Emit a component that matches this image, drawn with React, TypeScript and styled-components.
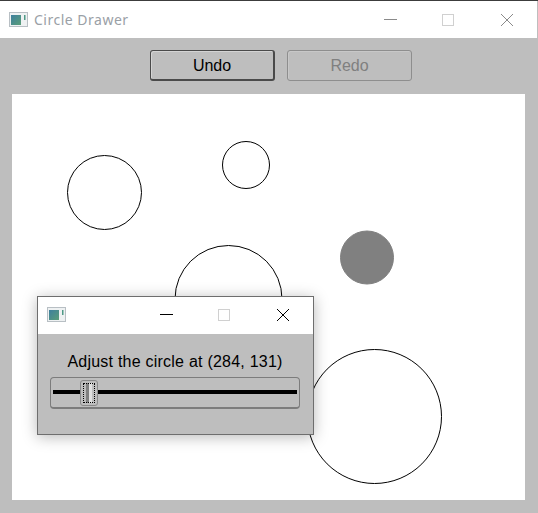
import styled, { createGlobalStyle } from "styled-components";

const circles = [
  { cx: 92.5, cy: 98.5, r: 37 },
  { cx: 234, cy: 71, r: 23.5 },
  { cx: 216.5, cy: 205, r: 53.5 },
  { cx: 355, cy: 163.5, r: 26.5, selected: true },
  { cx: 362.5, cy: 322.5, r: 67 },
];

function AppIcon({ id }: { id: string }) {
  return (
    <IconSvg width="20" height="16" viewBox="0 0 20 16">
      <defs>
        <linearGradient id={id} x1="0" y1="0" x2="1" y2="1">
          <stop offset="0" stopColor="#3d7f9e" />
          <stop offset="1" stopColor="#5a9e78" />
        </linearGradient>
      </defs>
      <rect x="0.5" y="0.5" width="18" height="14" fill="#eef1f2" stroke="#b8bfc4" />
      <rect x="2" y="3" width="10" height="10" fill={`url(#${id})`} />
      <rect x="15" y="3" width="1.5" height="5" fill="#4f9a86" />
    </IconSvg>
  );
}

function WindowButtons({ faded }: { faded?: boolean }) {
  const stroke = faded ? "#8a8a8a" : "#000";
  return (
    <>
      <WinButton>
        <svg width="14" height="14" viewBox="0 0 14 14">
          <path d="M0 6.5H13" stroke={stroke} strokeWidth="1" fill="none" />
        </svg>
      </WinButton>
      <WinButton>
        <svg width="14" height="14" viewBox="0 0 14 14">
          <rect x="0.5" y="1.5" width="11" height="11" stroke="#d0d0d0" fill="none" />
        </svg>
      </WinButton>
      <WinButton>
        <svg width="14" height="14" viewBox="0 0 14 14">
          <path d="M1 1L13 13M13 1L1 13" stroke={stroke} strokeWidth="1" fill="none" />
        </svg>
      </WinButton>
    </>
  );
}

export default function App() {
  return (
    <>
      <GlobalStyle />
      <Window>
        <TitleBar>
          <AppIcon id="main-icon" />
          <Title>Circle Drawer</Title>
          <TitleButtons>
            <WindowButtons faded />
          </TitleButtons>
        </TitleBar>
        <Body>
          <Toolbar>
            <PushButton $focused>Undo</PushButton>
            <PushButton disabled>Redo</PushButton>
          </Toolbar>
          <Canvas>
            <svg width="513" height="406" viewBox="0 0 513 406">
              {circles.map((c) => (
                <circle
                  key={c.cx}
                  cx={c.cx}
                  cy={c.cy}
                  r={c.r}
                  fill={c.selected ? "#808080" : "#fff"}
                  stroke={c.selected ? "#808080" : "#000"}
                  strokeWidth="1"
                />
              ))}
            </svg>
            <Dialog>
              <DialogTitleBar>
                <AppIcon id="dialog-icon" />
                <DialogButtons>
                  <WindowButtons />
                </DialogButtons>
              </DialogTitleBar>
              <DialogBody>
                <Label>Adjust the circle at (284, 131)</Label>
                <Slider>
                  <Groove />
                  <Thumb>
                    <ThumbFocus />
                  </Thumb>
                </Slider>
              </DialogBody>
            </Dialog>
          </Canvas>
        </Body>
      </Window>
    </>
  );
}

const GlobalStyle = createGlobalStyle`
  html, body {
    margin: 0;
    padding: 0;
    background: #bebebe;
  }
`;

const Window = styled.div`
  width: 538px;
  height: 513px;
  display: flex;
  flex-direction: column;
  overflow: hidden;
  background: #bebebe;
  border-top: 1px solid #3c3c3c;
  box-sizing: border-box;
  font-family: "Liberation Sans", Arial, sans-serif;
`;

const TitleBar = styled.div`
  height: 37px;
  flex-shrink: 0;
  display: flex;
  align-items: center;
  padding-left: 9px;
  background: #fff;
  margin-right: 1px;
`;

const IconSvg = styled.svg`
  flex-shrink: 0;
`;

const Title = styled.div`
  margin-left: 5px;
  font-family: "Noto Sans", "Open Sans", sans-serif;
  font-size: 14px;
  letter-spacing: 0.5px;
  color: #9aa0a6;
`;

const TitleButtons = styled.div`
  margin-left: auto;
  margin-right: 1px;
  display: flex;
`;

const WinButton = styled.div`
  width: 58px;
  height: 30px;
  display: flex;
  align-items: center;
  justify-content: center;
`;

const Body = styled.div`
  flex: 1;
  display: flex;
  flex-direction: column;
  padding: 12px 13px 13px 12px;
`;

const Toolbar = styled.div`
  display: flex;
  justify-content: center;
  gap: 12px;
  margin-bottom: 13px;
  padding-left: 25px;
`;

const PushButton = styled.button<{ $focused?: boolean }>`
  width: 125px;
  height: 31px;
  padding: 1px 0 0;
  box-sizing: border-box;
  border-radius: 3px;
  border: 1px solid ${(p) => (p.$focused ? "#4a4a4a" : "#8e8e8e")};
  border-right-width: ${(p) => (p.$focused ? 2 : 1)}px;
  border-bottom-width: ${(p) => (p.$focused ? 2 : 1)}px;
  background: #bebebe;
  box-shadow: inset 1px 1px 0 #d4d4d4;
  font-family: "Liberation Sans", Arial, sans-serif;
  font-size: 16px;
  color: #000;

  &:disabled {
    color: #808080;
    box-shadow: inset 1px 1px 0 #c8c8c8;
  }
`;

const Canvas = styled.div`
  position: relative;
  width: 513px;
  height: 406px;
  background: #fff;

  svg {
    display: block;
  }
`;

const Dialog = styled.div`
  position: absolute;
  left: 25px;
  top: 202px;
  width: 277px;
  height: 139px;
  box-sizing: border-box;
  border: 1px solid #6e6e6e;
  background: #bebebe;
  box-shadow: 0 2px 14px rgba(0, 0, 0, 0.28);
  display: flex;
  flex-direction: column;
`;

const DialogTitleBar = styled.div`
  height: 37px;
  box-sizing: border-box;
  padding: 0 0 1px 9px;
  flex-shrink: 0;
  display: flex;
  align-items: center;
  background: #fff;
`;

const DialogButtons = styled.div`
  margin-left: auto;
  display: flex;
  margin-right: 1px;
`;

const DialogBody = styled.div`
  display: flex;
  flex-direction: column;
  align-items: center;
  padding: 19px 13px 0 12px;
`;

const Label = styled.div`
  font-size: 16px;
  line-height: 18px;
  letter-spacing: 0.23px;
  color: #000;
  margin-bottom: 6px;
`;

const Slider = styled.div`
  position: relative;
  width: 250px;
  height: 32px;
  box-sizing: border-box;
  border: 1px solid #7c7c7c;
  border-bottom-width: 2px;
  border-radius: 4px;
  background: #bebebe;
  display: flex;
  align-items: center;
  padding: 0 2px 1px;
`;

const Groove = styled.div`
  flex: 1;
  height: 4px;
  background: #000;
`;

const Thumb = styled.div`
  position: absolute;
  left: 29px;
  top: 2px;
  width: 18px;
  height: 26px;
  box-sizing: border-box;
  border: 1px solid #8a8a8a;
  border-radius: 3px;
  background: #bebebe;
  padding: 2px;
`;

const ThumbFocus = styled.div`
  width: 100%;
  height: 100%;
  box-sizing: border-box;
  border: 1px dotted #000;
  background: linear-gradient(
    to right,
    #bebebe 0 2px,
    #808080 2px 5px,
    #e0e0e0 5px 8px,
    #bebebe 8px
  );
`;
